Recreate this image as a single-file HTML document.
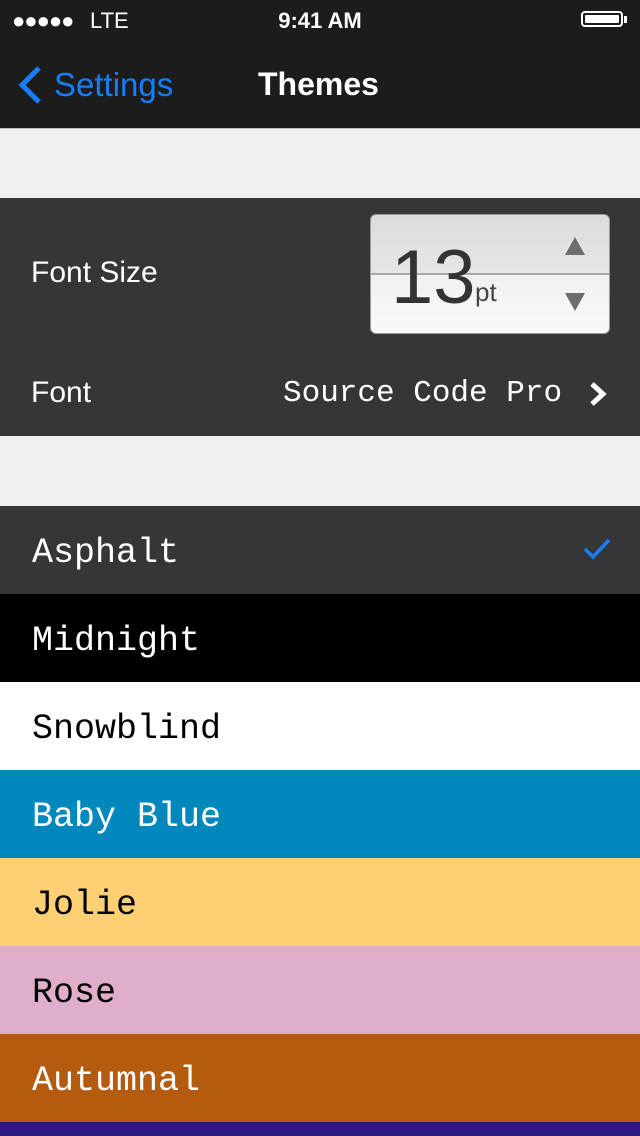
<!DOCTYPE html><html><head><meta charset="utf-8"><style>
body{margin:0;width:640px;height:1136px;overflow:hidden;background:#efeff4;font-family:"Liberation Sans",sans-serif;position:relative}
.a{position:absolute;left:0;width:640px}
.mono{font-family:"Liberation Mono",monospace}
.row{position:absolute;left:0;width:640px;height:88px;font-family:"Liberation Mono",monospace;font-size:35px;line-height:94px;text-indent:32px;overflow:hidden}
</style></head><body>
<div class="a" style="top:0;height:128px;background:#1c1c1c"></div>
<div class="a" style="top:128px;height:1px;background:#bbb"></div>
<div style="position:absolute;left:12px;top:8px;color:#fff;font-size:22px;letter-spacing:-1px">●●●●●</div>
<div style="position:absolute;left:90px;top:8px;color:#fff;font-size:22px">LTE</div>
<div style="position:absolute;left:0;width:640px;text-align:center;top:8px;color:#fff;font-size:22px;font-weight:bold">9:41 AM</div>
<div style="position:absolute;left:581px;top:11px;width:42px;height:16px;border:2px solid #fff;border-radius:4px;box-sizing:border-box;padding:2px"><div style="background:#fff;height:100%;border-radius:1px"></div></div>
<div style="position:absolute;left:624px;top:16px;width:3px;height:7px;background:#fff"></div>
<svg style="position:absolute;left:14px;top:64px" width="30" height="42"><path d="M25 4 L8 21 L25 38" stroke="#147efb" stroke-width="5" fill="none"/></svg>
<div style="position:absolute;left:54px;top:66px;color:#147efb;font-size:33px">Settings</div>
<div style="position:absolute;left:258px;top:66px;color:#fff;font-size:32px;font-weight:bold">Themes</div>
<div class="a" style="top:198px;height:238px;background:#363638"></div>
<div style="position:absolute;left:31px;top:256px;color:#fff;font-size:30px">Font Size</div>
<div style="position:absolute;left:31px;top:376px;color:#fff;font-size:30px">Font</div>
<div class="mono" style="position:absolute;left:283px;top:376px;color:#fff;font-size:31px">Source Code Pro</div>
<svg style="position:absolute;left:588px;top:380px" width="22" height="28"><path d="M4 4 L15 14 L4 24" stroke="#fff" stroke-width="5" fill="none"/></svg>
<div style="position:absolute;left:370px;top:214px;width:240px;height:120px;border-radius:6px;background:linear-gradient(#dcdcdc,#e6e6e6 50%,#f0f0f0 51%,#fafafa);overflow:hidden;border:1px solid #999;box-sizing:border-box">
<div style="position:absolute;left:0;right:0;top:58px;height:2px;background:#aaa"></div>
<div style="position:absolute;left:20px;top:25px;font-size:76px;color:#333;line-height:1">13</div>
<div style="position:absolute;left:104px;top:62px;font-size:26px;color:#444">pt</div>
<svg style="position:absolute;left:192px;top:18px" width="24" height="84"><path d="M2 22 L12 4 L22 22Z M2 60 L22 60 L12 78Z" fill="#6b6e71"/></svg>
</div>
<div class="row" style="top:506px;background:#363638;color:#fff">Asphalt</div>
<svg style="position:absolute;left:582px;top:536px" width="30" height="26"><path d="M3 13 L11 21 L27 4" stroke="#147efb" stroke-width="3.5" fill="none"/></svg>
<div class="row" style="top:594px;background:#000;color:#fff">Midnight</div>
<div class="row" style="top:682px;background:#fff;color:#000">Snowblind</div>
<div class="row" style="top:770px;background:#0088bc;color:#fff">Baby Blue</div>
<div class="row" style="top:858px;background:#fecf74;color:#000">Jolie</div>
<div class="row" style="top:946px;background:#dfaecb;color:#000">Rose</div>
<div class="row" style="top:1034px;background:#b45b10;color:#fff">Autumnal</div>
<div class="a" style="top:1122px;height:14px;background:#2b1a80"></div>
</body></html>
